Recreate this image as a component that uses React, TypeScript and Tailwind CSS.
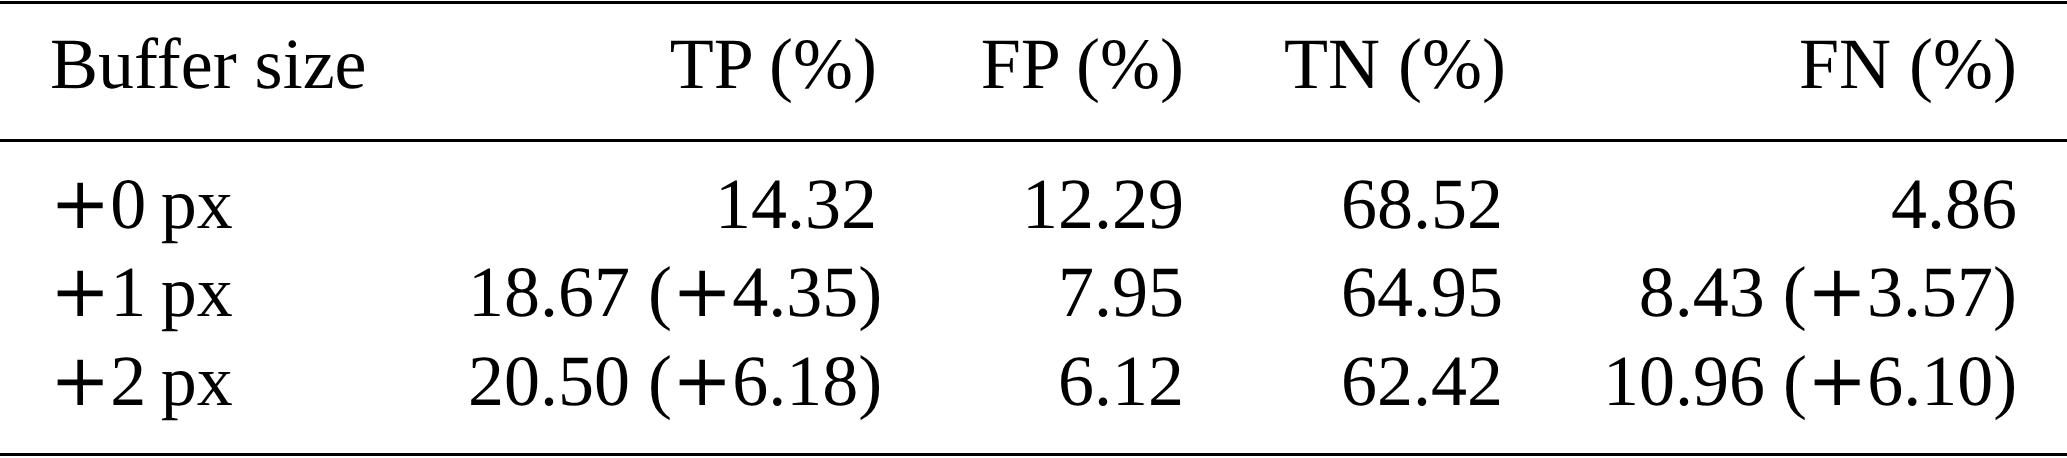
const rows = [
  { size: "0", tp: "14.32", fp: "12.29", tn: "68.52", fn: "4.86" },
  { size: "1", tp: "18.67", tpDelta: "4.35", fp: "7.95", tn: "64.95", fn: "8.43", fnDelta: "3.57" },
  { size: "2", tp: "20.50", tpDelta: "6.18", fp: "6.12", tn: "62.42", fn: "10.96", fnDelta: "6.10" },
];

// math-style plus sign, a bit wider than the text one
const Plus = () => <span className="leading-none font-['DejaVu_Serif']">+</span>;

const Value = ({ value, delta }: { value: string; delta?: string }) => (
  <>
    {value}
    {delta && (
      <>
        {" ("}
        <Plus />
        {delta})
      </>
    )}
  </>
);

const cols = "grid grid-cols-[418px_509px_307px_319px_514px]";
const left = "px-[50px] text-left whitespace-nowrap";
const right = "px-[50px] text-right whitespace-nowrap";

export default function App() {
  return (
    <div className="w-[2067px] h-[458px] bg-white pt-px text-black font-['Liberation_Serif'] text-[72px] leading-[88.5px] [text-rendering:geometricPrecision]">
      <div className={`${cols} border-t-[3px] border-b-[3px] border-black pt-[16px] pb-[30px]`}>
        <div className={left}>Buffer size</div>
        <div className={right}>TP (%)</div>
        <div className={right}>FP (%)</div>
        <div className={right}>TN (%)</div>
        <div className={right}>FN (%)</div>
      </div>
      <div className={`${cols} border-b-[3px] border-black pt-[18px] pb-[28px]`}>
        {rows.map((r) => (
          <div key={r.size} className="contents">
            <div className={left}>
              <Plus />
              {r.size}
              {"\u2009"}px
            </div>
            <div className={right}>
              <Value value={r.tp} delta={r.tpDelta} />
            </div>
            <div className={right}>{r.fp}</div>
            <div className={right}>{r.tn}</div>
            <div className={right}>
              <Value value={r.fn} delta={r.fnDelta} />
            </div>
          </div>
        ))}
      </div>
    </div>
  );
}
